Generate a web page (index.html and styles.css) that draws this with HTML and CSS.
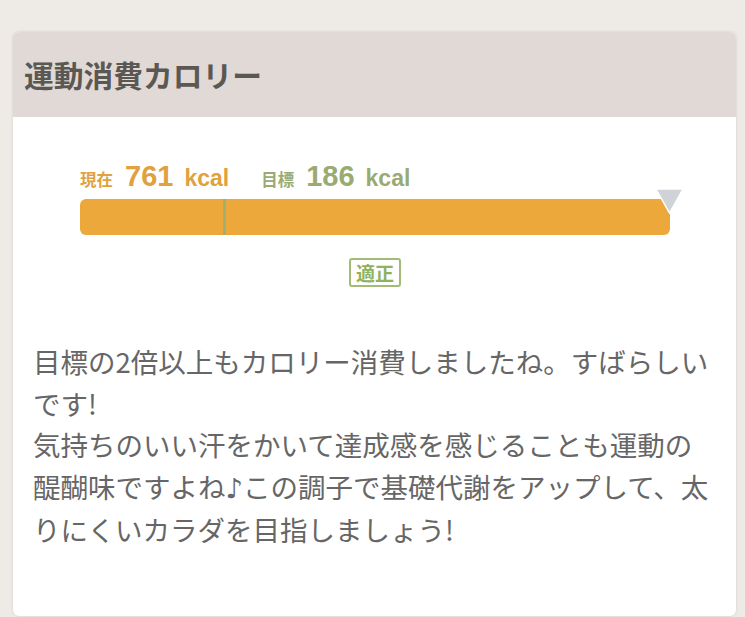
FILE: index.html
```html
<!DOCTYPE html>
<html lang="ja">
<head>
<meta charset="utf-8">
<title>運動消費カロリー</title>
<link rel="stylesheet" href="styles.css">
</head>
<body>
<div class="page">
  <section class="card">
    <header class="card-head">
      <h2 class="card-title">運動消費カロリー</h2>
    </header>
    <div class="card-body">
      <div class="meter">
        <div class="meter-labels">
          <span class="stat stat-now"><span class="stat-label">現在</span><span class="stat-num">761</span><span class="stat-unit">kcal</span></span>
          <span class="stat stat-goal"><span class="stat-label">目標</span><span class="stat-num">186</span><span class="stat-unit">kcal</span></span>
        </div>
        <div class="bar">
          <div class="bar-fill"></div>
          <span class="goal-mark" style="left: 24.4%"></span>
          <svg class="pointer" width="29" height="26" viewBox="0 0 29 26" aria-hidden="true">
            <polygon points="1,1 28,1 14.5,25" fill="#cfd2d7" stroke="#ffffff" stroke-width="1.5" stroke-linejoin="miter"/>
          </svg>
        </div>
        <div class="badge-row"><span class="badge">適正</span></div>
      </div>
      <p class="message">目標の2倍以上もカロリー消費しましたね。すばらしいです!<br>気持ちのいい汗をかいて達成感を感じることも運動の醍醐味ですよね<span class="note">♪</span>この調子で基礎代謝をアップして、太りにくいカラダを目指しましょう!</p>
    </div>
  </section>
</div>
</body>
</html>
```

FILE: styles.css
```css
html, body {
  margin: 0;
  padding: 0;
  background: #eeebe6;
  overflow: hidden;
}

.page {
  padding: 32px 9px 0 13px;
  height: 617px;
  box-sizing: border-box;
}

.card {
  background: #ffffff;
  border-radius: 6px;
  box-shadow: 0 0 3px rgba(0, 0, 0, 0.12);
  height: 584px;
  overflow: hidden;
  display: flex;
  flex-direction: column;
}

.card-head {
  background: #e0d9d5;
  height: 85px;
  display: flex;
  align-items: center;
  padding: 0 11px;
  box-sizing: border-box;
}

.card-title {
  margin: 0;
  font-family: "Noto Sans CJK JP", "Liberation Sans", sans-serif;
  font-weight: 700;
  font-size: 29.75px;
  color: #5b5753;
  line-height: 1;
}

.card-body {
  flex: 1;
  padding: 44px 20px 0 20px;
}

.meter {
  padding: 0 46px 0 47px;
}

.meter-labels {
  display: flex;
  align-items: baseline;
  gap: 32px;
  height: 30px;
  line-height: 30px;
}

.stat {
  display: flex;
  align-items: baseline;
  font-weight: 700;
}

.stat-now { color: #e0a13f; }
.stat-goal { color: #9aab72; }

.stat-label {
  font-family: "Noto Sans CJK JP", sans-serif;
  font-size: 16.5px;
  margin-right: 12px;
}

.stat-num {
  font-family: "Liberation Sans", Arial, sans-serif;
  font-size: 29px;
  margin-right: 11px;
}

.stat-unit {
  font-family: "Liberation Sans", Arial, sans-serif;
  font-size: 23px;
}

.bar {
  position: relative;
  margin-top: 8px;
  height: 36px;
}

.bar-fill {
  height: 100%;
  background: #eca83a;
  border-radius: 6px;
}

.goal-mark {
  position: absolute;
  top: 0;
  bottom: 0;
  width: 3px;
  margin-left: -1px;
  background: #9fb071;
}

.pointer {
  position: absolute;
  right: -14px;
  top: -11px;
}

.badge-row {
  display: flex;
  justify-content: center;
  margin-top: 23px;
}

.badge {
  font-family: "Noto Sans CJK JP", sans-serif;
  font-weight: 700;
  font-size: 19px;
  line-height: 25px;
  color: #8fb35c;
  border: 2px solid #a2bc78;
  border-radius: 3px;
  padding: 0 5px;
  background: #ffffff;
}

.message {
  margin: 54px 0 0 0;
  font-family: "Noto Sans CJK JP", sans-serif;
  font-size: 27.5px;
  line-height: 41.5px;
  color: #666666;
}

.note {
  font-family: "DejaVu Sans", sans-serif;
}
```
